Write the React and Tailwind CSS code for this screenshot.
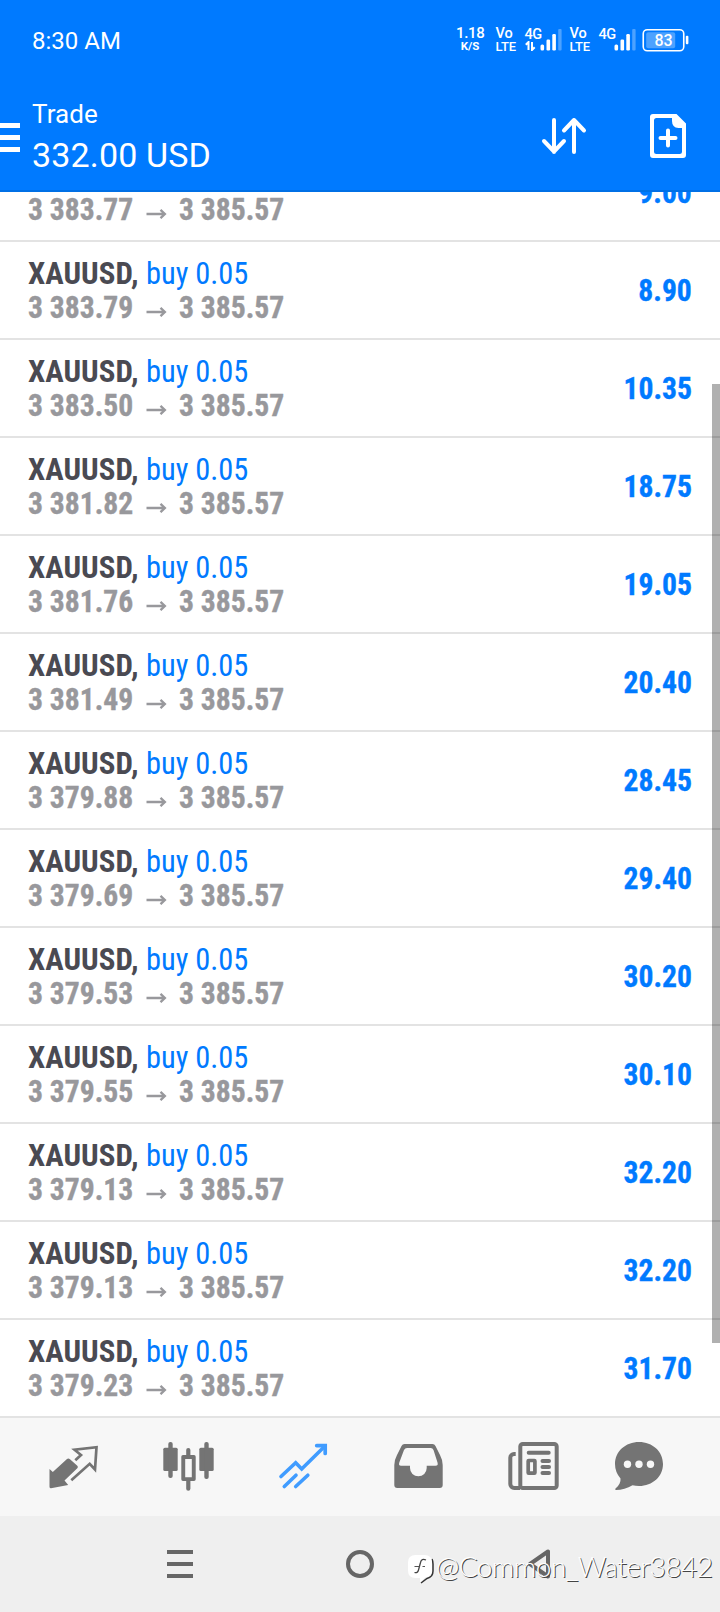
import React from 'react';

const POSITIONS = [
  { id: 1, open: '3 383.77', profit: '9.00' },
  { id: 2, open: '3 383.79', profit: '8.90' },
  { id: 3, open: '3 383.50', profit: '10.35' },
  { id: 4, open: '3 381.82', profit: '18.75' },
  { id: 5, open: '3 381.76', profit: '19.05' },
  { id: 6, open: '3 381.49', profit: '20.40' },
  { id: 7, open: '3 379.88', profit: '28.45' },
  { id: 8, open: '3 379.69', profit: '29.40' },
  { id: 9, open: '3 379.53', profit: '30.20' },
  { id: 10, open: '3 379.55', profit: '30.10' },
  { id: 11, open: '3 379.13', profit: '32.20' },
  { id: 12, open: '3 379.13', profit: '32.20' },
  { id: 13, open: '3 379.23', profit: '31.70' }
];

const CURRENT_PRICE = '3 385.57';

const SimStatus = ({ withData = false }) => (
  <div className="flex w-[74px] shrink-0 font-medium">
    <div className="w-[29px]">
      <div className="h-[13px] text-[14.5px] leading-[14px]">Vo</div>
      <div className="text-[13px] leading-[13px]">LTE</div>
    </div>
    <div className="w-[15.5px]">
      <div className="h-[14px] text-[14.5px] leading-[16px] tracking-[-0.5px]">4G</div>
      {withData && (
        <svg width="11" height="10" viewBox="0 0 11 10" fill="none" stroke="currentColor" strokeWidth="2">
          <path d="M3.5 9V1L0.8 3.8M7 1v8l2.7-2.8" />
        </svg>
      )}
    </div>
    <svg className="mt-[2px]" width="22" height="22" viewBox="0 0 22 22" fill="currentColor">
      <rect x="0.5" y="15.5" width="3.6" height="6" rx="1.5" />
      <rect x="6.5" y="10.5" width="3.6" height="11" rx="1.2" />
      <rect x="12.3" y="5" width="3.6" height="16.5" rx="1.2" />
      <rect x="18.2" y="0" width="3.4" height="21.5" rx="1" opacity="0.3" />
    </svg>
  </div>
);

const StatusBar = () => (
  <div className="flex h-20 items-start pl-8 text-white">
    <div className="w-[424px] pt-[27px] text-[24px] leading-7">8:30 AM</div>
    <div className="flex pt-[27px]">
      <div className="w-[39.5px] shrink-0 font-medium">
        <div className="w-[28px] text-center text-[15px] leading-[13px] tracking-[-0.3px]">1.18</div>
        <div className="w-[28px] text-center text-[11.5px] leading-[12px] font-bold">K/S</div>
      </div>
      <SimStatus withData />
      <SimStatus />
      <svg className="mt-[1px] -ml-[2px]" width="48" height="24" viewBox="0 0 48 24" fill="none">
        <rect x="1.25" y="1.75" width="40.5" height="21" rx="4" stroke="currentColor" strokeWidth="1.6" />
        <rect x="4.2" y="4.2" width="29" height="16" rx="2" fill="currentColor" opacity="0.3" />
        <rect x="43.8" y="7.8" width="2.6" height="8.5" rx="1" fill="currentColor" />
        <text x="21.500" y="17.7" textAnchor="middle" fill="currentColor" fontSize="16" fontWeight="500">83</text>
      </svg>
    </div>
  </div>
);

const AppBar = () => (
  <div className="flex h-[112px] items-start border-b-2 border-[#0070e6] text-white">
    <div className="mt-[43px] flex w-5 flex-col gap-[7px]">
      <div className="h-[5px] bg-white"></div>
      <div className="h-[5px] bg-white"></div>
      <div className="h-[5px] bg-white"></div>
    </div>
    <div className="w-[520px] pt-[18px] pl-3">
      <div className="text-[26px] leading-[32px] tracking-[0.1px]">Trade</div>
      <div className="pt-[5px] text-[34px] leading-[40px] tracking-[0.15px]">332.00 USD</div>
    </div>
    <svg className="mt-9" width="48" height="44" viewBox="0 0 48 44" fill="none" stroke="currentColor" strokeWidth="4" strokeLinecap="round" strokeLinejoin="round">
      <path d="M14 4v32M4 25l10 10.5L24 25" />
      <path d="M34 36V4M24 14.5L34 4l10 10.5" />
    </svg>
    <svg className="mt-8 ml-[60px]" width="40" height="48" viewBox="0 0 40 48">
      <path
        fill="currentColor"
        fillRule="evenodd"
        d="M5 2H28.5L38 11.5V43a3 3 0 0 1-3 3H5a3 3 0 0 1-3-3V5a3 3 0 0 1 3-3ZM8.5 6A2.5 2.5 0 0 0 6 8.5V39.5A2.5 2.5 0 0 0 8.5 42H31.5A2.5 2.5 0 0 0 34 39.5V16H30.5Q24 15.5 24 9V6Z"
      />
      <path d="M12.5 26H27.5M20 18.5V33.5" stroke="currentColor" strokeWidth="4" strokeLinecap="round" />
    </svg>
  </div>
);

const PositionRow = ({ open, profit }) => (
  <div className="flex h-[98px] shrink-0 items-start justify-between border-b-2 border-[#e3e3e3] px-7 pt-[14px] font-['Roboto_Condensed','Roboto',sans-serif] text-[32px] leading-[34px]">
    <div>
      <div className="flex whitespace-nowrap">
        <span className="w-[118px] origin-left scale-x-[0.965] font-bold text-[#4a4a52]">XAUUSD,</span>
        <span className="origin-left scale-x-[0.95] text-[#007aff]">buy 0.05</span>
      </div>
      <div className="flex font-bold whitespace-nowrap text-[#98989c]">
        <span className="w-[118px] origin-left scale-x-[0.925] [-webkit-text-stroke:0.4px]">{open}</span>
        <svg className="mt-[15px] mr-[12px]" width="21" height="12" viewBox="0 0 21 12" fill="none" stroke="currentColor" strokeWidth="2.3">
          <path d="M0.5 7H19M14.5 2.8l4.4 4.2-4.4 4.2" />
        </svg>
        <span className="origin-left scale-x-[0.925] [-webkit-text-stroke:0.4px]">{CURRENT_PRICE}</span>
      </div>
    </div>
    <div className="origin-right scale-x-[0.925] pt-[17px] font-bold text-[#007aff] [-webkit-text-stroke:0.4px]">{profit}</div>
  </div>
);

const TabBar = () => (
  <div className="flex h-[98px] items-start gap-[61px] bg-[#f7f7f7] pt-[22px] pl-[46px] text-[#747474]">
    {/* Quotes */}
    <svg className="shrink-0" width="54" height="54" viewBox="0 0 54 54" fill="none">
      <path d="M3.5 29l3.3 3L21 19q1.5-1 3 0.3l7.3 6.5q1.3 1.2 0 2.5L18.5 40.5l3.7 4.5L5 48.3q-1.5 0-1.5-1.5Z" fill="currentColor" />
      <path d="M29.3 20.3L35 15l-6.5-5.3L50.5 7.2 49 29.5l-5.3-5.7L25.3 40.3" stroke="currentColor" strokeWidth="2.7" />
    </svg>
    {/* Charts */}
    <svg className="shrink-0" width="54" height="54" viewBox="0 0 54 54" fill="currentColor">
      <rect x="2.3" y="7.7" width="14.4" height="23.3" rx="1.5" />
      <rect x="7.3" y="2" width="4.4" height="36" rx="2" />
      <path fillRule="evenodd" d="M22 15H33a1.7 1.7 0 0 1 1.7 1.7V39.3A1.7 1.7 0 0 1 33 41H22a1.7 1.7 0 0 1-1.7-1.7V16.7A1.7 1.7 0 0 1 22 15ZM24.2 19V37.3H30.8V19Z" />
      <path d="M25.2 16V10a2.1 2.1 0 0 1 4.2 0v6ZM25.2 40v8.7a2.1 2.1 0 0 0 4.2 0V40Z" />
      <rect x="38.3" y="7.7" width="14.4" height="23.3" rx="1.5" />
      <rect x="43.3" y="2" width="4.4" height="37" rx="2" />
    </svg>
    {/* Trade */}
    <svg className="shrink-0 text-[#409cff]" width="54" height="54" viewBox="0 0 54 54" fill="none" stroke="currentColor" strokeWidth="3.6" strokeLinecap="round">
      <path d="M5 36.5L19.7 22.7l6 6.3L48 7" />
      <path d="M8.3 46.5L20 35.2M19.7 46.5L31.8 35.2" />
      <path d="M40.7 5.6H49.2V13.5" strokeWidth="3.7" />
    </svg>
    {/* History */}
    <svg className="shrink-0" width="54" height="54" viewBox="0 0 54 54" fill="currentColor" fillRule="evenodd">
      <path d="M13.5 4H41.5Q43.5 4 44.5 6L49 15Q51.7 20 51.7 25V45a3 3 0 0 1-3 3H6.3a3 3 0 0 1-3-3V25Q3.3 20 6 15L10.5 6Q11.5 4 13.5 4ZM16 8Q14 8 13 10L8.3 22.5Q7.3 25.7 10 25.7H19V28a8.35 8.35 0 0 0 16.7 0V25.7H44.5Q47.5 25.7 46.5 22.5L42.5 10Q41.7 8 39.7 8Z" />
    </svg>
    {/* News */}
    <svg className="shrink-0" width="54" height="54" viewBox="0 0 54 54" fill="none" stroke="currentColor" strokeWidth="4" strokeLinecap="round">
      <rect x="14.3" y="4" width="36.4" height="44" rx="2.5" />
      <path d="M9.7 14H8a3.7 3.7 0 0 0-3.7 3.7V44a4 4 0 0 0 4 4H14" strokeLinecap="butt" />
      <path d="M22.7 12.8H42.7M36.5 21H43M36.5 27H43M36.5 33H43" />
      <rect x="22.2" y="20.5" width="6.7" height="12.7" strokeWidth="3.7" rx="0.5" />
    </svg>
    {/* Messages */}
    <svg className="-ml-[9px] shrink-0" width="54" height="54" viewBox="0 0 54 54" fill="currentColor">
      <path d="M27 2C40.5 2 51 11.5 51 24S40.5 46 27 46Q23.5 46 20.5 45.2C15.5 48 9.5 50 4 50Q2.5 49.7 3.5 48.5C7 45.5 9 42 8.5 38.5Q3 32 3 24C3 11.5 13.5 2 27 2Z" />
      <circle cx="15.5" cy="24.3" r="3.7" fill="#f7f7f7" />
      <circle cx="27" cy="24.3" r="3.7" fill="#f7f7f7" />
      <circle cx="38.5" cy="24.3" r="3.7" fill="#f7f7f7" />
    </svg>
  </div>
);

const SystemNav = () => (
  <div className="relative flex h-24 items-center justify-around bg-[#efefef] px-[90px] text-[#666666]">
    <div className="flex w-[26px] flex-col gap-2">
      <div className="h-1 bg-[#666666]"></div>
      <div className="h-1 bg-[#666666]"></div>
      <div className="h-1 bg-[#666666]"></div>
    </div>
    <div className="size-7 rounded-full border-4 border-[#666666]"></div>
    <svg width="26" height="32" viewBox="0 0 26 32" fill="none" stroke="currentColor" strokeWidth="4" strokeLinejoin="round">
      <path d="M21 3.5V28.5L3 16Z" />
    </svg>
    {/* Author tag over the navigation bar */}
    <div className="absolute top-[33px] left-[407px] flex items-start text-white">
      <svg width="28" height="36" viewBox="0 0 28 36" fill="none">
        <path d="M25 10q1 2 1 5v7q0 6-6 7.5L14 34" stroke="#333" strokeWidth="1.5" />
        <path d="M8.5 6H17.5Q25 6 25 13.5V21Q25 28 18 28.5L13 33.500V29H8.5Q1 29 1 21.5V13.5Q1 6 8.5 6Z" fill="#fff" />
        <path d="M19 11q-4.500-2-5.500 2.500L11.500 21q-1 3.500-4 2.500" stroke="#444" strokeWidth="1.3" />
        <path d="M7.5 17.5h5M15.5 17.5h2.500" stroke="#555" strokeWidth="1.2" />
      </svg>
      <span className="ml-[1px] font-['Lato',sans-serif] text-[28px] leading-[34px] font-light tracking-[-0.55px] whitespace-nowrap text-shadow-[1px_1px_0_#444]">@Common_Water3842</span>
    </div>
  </div>
);

const App = () => {
  return (
    <div className="flex h-[1612px] w-[720px] flex-col overflow-hidden bg-white font-['Roboto',sans-serif]">
      <div className="bg-[#007aff]">
        <StatusBar />
        <AppBar />
      </div>
      <div className="relative flex h-[1226px] flex-col justify-end overflow-hidden">
        {POSITIONS.map(position => (
          <PositionRow key={position.id} open={position.open} profit={position.profit} />
        ))}
        <div className="absolute top-[192px] right-0 h-[959px] w-2 bg-black/31"></div>
      </div>
      <TabBar />
      <SystemNav />
    </div>
  );
};

export default App;
